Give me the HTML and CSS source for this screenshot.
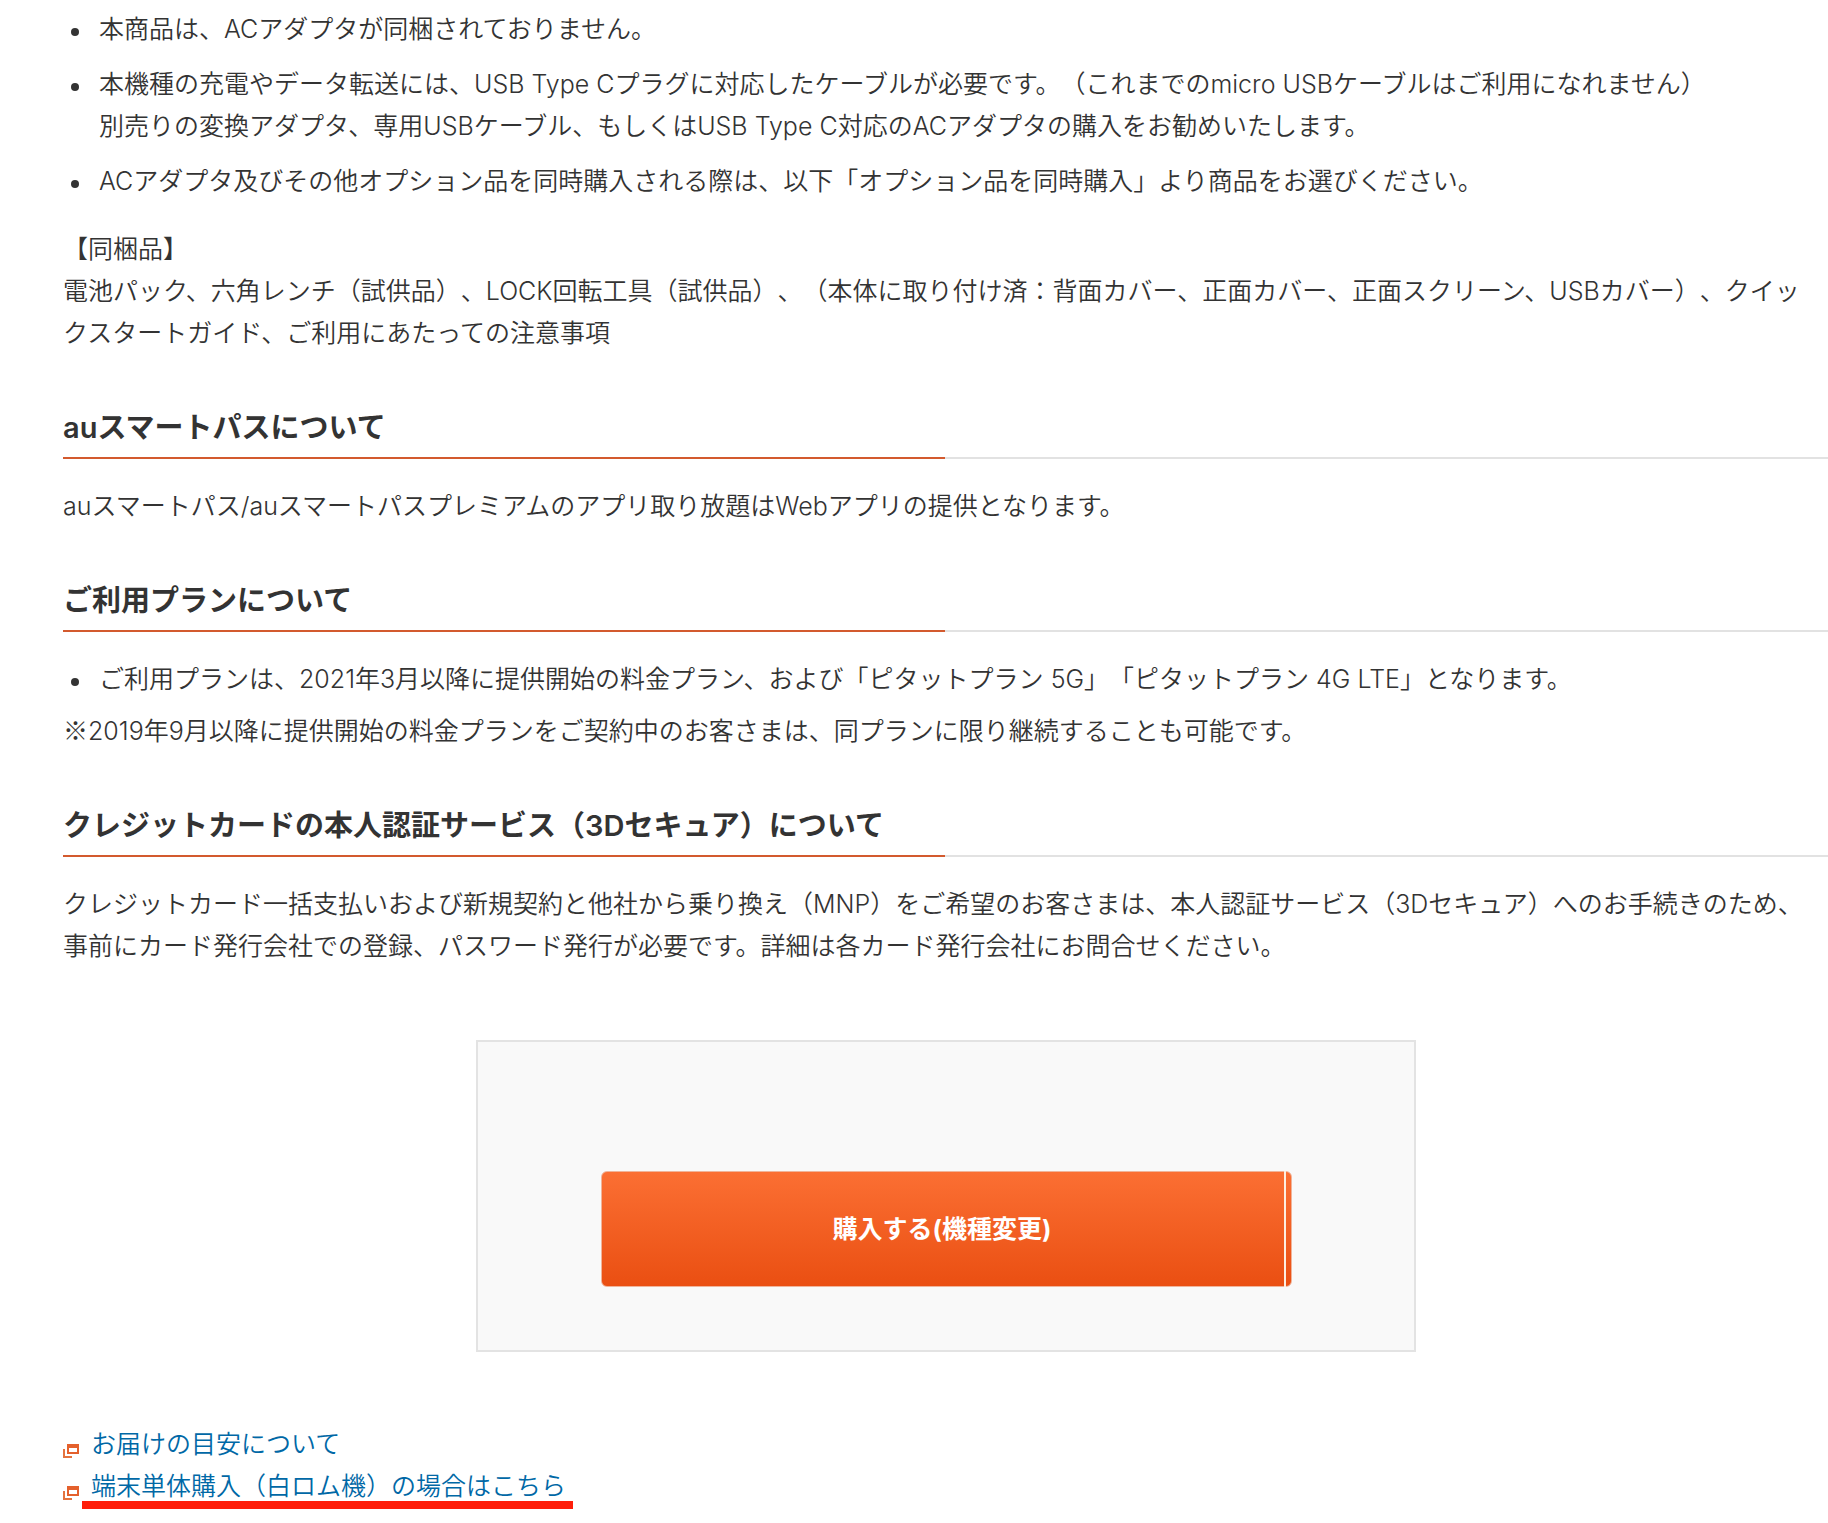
FILE: index.html
```html
<!DOCTYPE html>
<html lang="ja">
<head>
<meta charset="UTF-8">
<meta name="viewport" content="width=device-width, initial-scale=1.0">
<title>ご購入にあたっての注意事項</title>
<link rel="stylesheet" href="styles.css">
</head>
<body>
<main class="content">
    <ul class="list">
        <li>本商品は、ACアダプタが同梱されておりません。</li>
        <li>本機種の充電やデータ転送には、USB Type Cプラグに対応したケーブルが必要です。（これまでのmicro USBケーブルはご利用になれません）<br>別売りの変換アダプタ、専用USBケーブル、もしくはUSB Type C対応のACアダプタの購入をお勧めいたします。</li>
        <li>ACアダプタ及びその他オプション品を同時購入される際は、以下「オプション品を同時購入」より商品をお選びください。</li>
    </ul>
    <p class="bundle">【同梱品】<br>電池パック、六角レンチ（試供品）、LOCK回転工具（試供品）、（本体に取り付け済：背面カバー、正面カバー、正面スクリーン、USBカバー）、クイックスタートガイド、ご利用にあたっての注意事項</p>

    <h2 class="heading">auスマートパスについて</h2>
    <p>auスマートパス/auスマートパスプレミアムのアプリ取り放題はWebアプリの提供となります。</p>

    <h2 class="heading">ご利用プランについて</h2>
    <ul class="list">
        <li>ご利用プランは、2021年3月以降に提供開始の料金プラン、および「ピタットプラン 5G」「ピタットプラン 4G LTE」となります。</li>
    </ul>
    <p class="note"><span class="kome">※</span>2019年9月以降に提供開始の料金プランをご契約中のお客さまは、同プランに限り継続することも可能です。</p>

    <h2 class="heading">クレジットカードの本人認証サービス（3Dセキュア）について</h2>
    <p>クレジットカード一括支払いおよび新規契約と他社から乗り換え（MNP）をご希望のお客さまは、本人認証サービス（3Dセキュア）へのお手続きのため、事前にカード発行会社での登録、パスワード発行が必要です。詳細は各カード発行会社にお問合せください。</p>

    <div class="buy-box">
        <button type="button" class="buy-button">購入する(機種変更)</button>
    </div>

    <ul class="links">
        <li>
            <svg class="icon" viewBox="0 0 16 14" aria-hidden="true">
                <path d="M4 0h12v10H4zM6 4v4h8V4z" fill="#e4602c" fill-rule="evenodd"/>
                <path d="M1 5v8h8" fill="none" stroke="#e4733f" stroke-width="2"/>
            </svg>
            <a href="#">お届けの目安について</a>
        </li>
        <li>
            <svg class="icon" viewBox="0 0 16 14" aria-hidden="true">
                <path d="M4 0h12v10H4zM6 4v4h8V4z" fill="#e4602c" fill-rule="evenodd"/>
                <path d="M1 5v8h8" fill="none" stroke="#e4733f" stroke-width="2"/>
            </svg>
            <a href="#" class="marked">端末単体購入（白ロム機）の場合はこちら</a>
        </li>
    </ul>
</main>
</body>
</html>
```
FILE: styles.css
```css
body {
    margin: 0;
    background-color: #fff;
    color: #333;
    font-family: Inter, "Noto Sans CJK JP", sans-serif;
    font-size: 25px;
    font-weight: 350;
    line-height: 42px;
    text-spacing-trim: space-all;
}

.content {
    padding: 8px 0 14px 63px;
}

p, ul {
    margin: 0;
    padding: 0;
}

p {
    padding-right: 14px;
}

/*---------------- Lists ---------------- */
.list {
    display: flex;
    flex-direction: column;
    gap: 13px;
    list-style: none;
}

.list li {
    display: flex;
    gap: 20px;
    padding-left: 8px;
}

.list li::before {
    content: '';
    flex: none;
    width: 8px;
    height: 8px;
    margin-top: 20px;
    border-radius: 50%;
    background-color: #333;
}

.bundle {
    margin-top: 26px;
}

.note {
    margin-top: 10px;
}

/* full-width reference mark */
.kome {
    font-family: "Noto Sans CJK JP", sans-serif;
    line-height: 1;
}

/*---------------- Headings ---------------- */
.heading {
    margin: 53px 0 26px;
    padding-bottom: 10px;
    font-size: 29px;
    font-weight: 600;
    line-height: 42px;
    background: linear-gradient(to right, #d35a2e 50%, #e2e2e2 50%) bottom / 100% 2px no-repeat;
}

/*---------------- Purchase ---------------- */
.buy-box {
    box-sizing: border-box;
    max-width: 940px;
    margin: 73px auto 0;
    padding: 129px 122px 63px 123px;
    border: 2px solid #e3e3e3;
    background-color: #f9f9f9;
}

.buy-button {
    position: relative;
    display: block;
    width: 100%;
    height: 116px;
    padding: 0 8px 4px 0;
    border: 1px solid #f0b49a;
    border-radius: 6px;
    background: linear-gradient(#fb6f33, #ea4f12);
    color: #fff;
    font-family: inherit;
    font-size: 25px;
    font-weight: 700;
    cursor: pointer;
}

/* light seam near the right edge of the button */
.buy-button::after {
    content: '';
    position: absolute;
    top: -1px;
    right: 5px;
    bottom: -1px;
    width: 2px;
    background-color: #fdeee0;
}

/*---------------- Links ---------------- */
.links {
    margin-top: 71px;
    list-style: none;
}

.links li {
    display: flex;
    align-items: center;
    gap: 12px;
}

.icon {
    width: 16px;
    height: 14px;
    margin-top: 14px;
}

.links a {
    color: #0068a6;
    text-decoration: none;
}

.marked {
    position: relative;
}

.marked::after {
    content: '';
    position: absolute;
    left: -9px;
    right: -7px;
    bottom: -2px;
    height: 8px;
    background-color: #ff1e0a;
}
```
